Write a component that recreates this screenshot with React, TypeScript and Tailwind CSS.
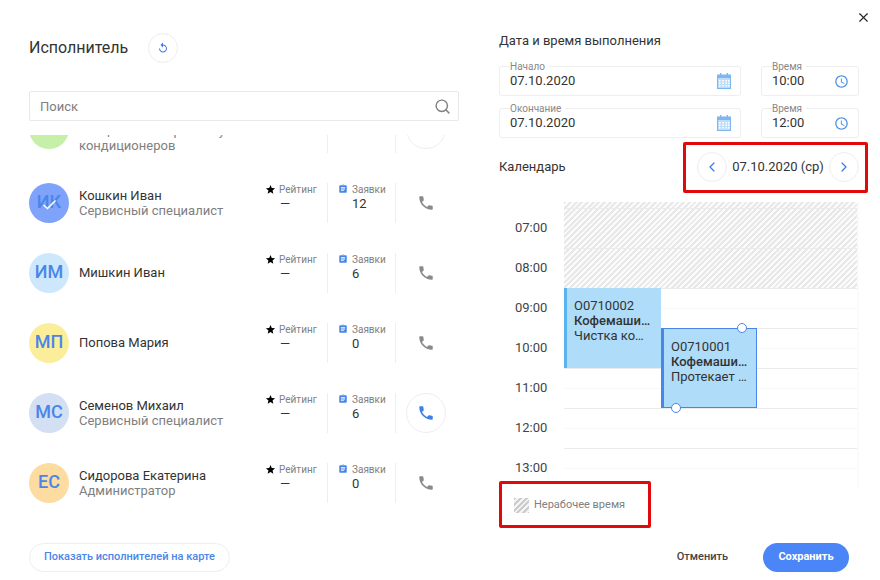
import React from "react";
import { MdPhone, MdStar, MdAssignment, MdReplay, MdAccessTime } from "react-icons/md";
import { ChevronLeft, ChevronRight, Search, X } from "lucide-react";

type P = { ini: string; bg: string; name: string; role?: string; count?: string; active?: boolean; tall?: boolean; check?: boolean };

const people: P[] = [
  { ini: "СМ", bg: "bg-[#c6f0a9]", name: "Смирнов Максим", role: "Специалист по ремонту кондиционеров", count: "3", active: true, tall: true },
  { ini: "ИК", bg: "bg-[#7fa2fb]", name: "Кошкин Иван", role: "Сервисный специалист", count: "12", check: true },
  { ini: "ИМ", bg: "bg-[#cde8fd]", name: "Мишкин Иван", count: "6" },
  { ini: "МП", bg: "bg-[#fbee9b]", name: "Попова Мария", count: "0" },
  { ini: "МС", bg: "bg-[#d3dff3]", name: "Семенов Михаил", role: "Сервисный специалист", count: "6", active: true },
  { ini: "ЕС", bg: "bg-[#fcdca0]", name: "Сидорова Екатерина", role: "Администратор", count: "0" },
];

const hatch = "bg-[repeating-linear-gradient(135deg,#e8e8e8_0,#e8e8e8_2px,#fbfbfb_2px,#fbfbfb_4px)]";

function CalendarIcon() {
  return (
    <svg width="14" height="16" viewBox="0 0 14 16" className="text-[#7db7f2]">
      <rect x="0.5" y="2" width="13" height="13.5" fill="#bcdcf8" stroke="currentColor" strokeWidth="1" />
      <rect x="0" y="2" width="14" height="3" fill="currentColor" />
      <rect x="3" y="0" width="1.4" height="3" fill="currentColor" />
      <rect x="9.6" y="0" width="1.4" height="3" fill="currentColor" />
      {[2, 5.2, 8.4, 11].map((x) =>
        [7, 9.5, 12].map((y) => <rect key={`${x}-${y}`} x={x} y={y} width="1.6" height="1.5" fill="#ffffff" />)
      )}
    </svg>
  );
}

function Field({ label, value, icon, className }: { label: string; value: string; icon: React.ReactNode; className: string }) {
  return (
    <div className={`relative h-[30px] flex items-center justify-between border border-[#eeeeee] rounded-[3px] pl-[10px] text-[13px] text-[#333333] ${className}`}>
      <span className="absolute left-[10px] -top-[6px] bg-white pr-[4px] text-[10px] leading-[12px] text-[#888888]">{label}</span>
      <span>{value}</span>
      {icon}
    </div>
  );
}

function Row({ p }: { p: P }) {
  return (
    <div className={`flex items-center mb-[30px] ${p.tall ? "h-[48px]" : "h-10"}`}>
      <div className={`relative w-10 h-10 shrink-0 rounded-full flex items-center justify-center text-[18px] leading-[38px] pb-[2px] font-medium text-[#4a86e8] ${p.bg}`}>
        {p.ini}
        {p.check && (
          <svg width="16" height="12" viewBox="0 0 16 12" className="absolute left-[13px] top-[16px]">
            <path d="M1.5 6 L5.5 9.5 L13.5 1.5" fill="none" stroke="#ffffff" strokeWidth="1.6" />
          </svg>
        )}
      </div>
      <div className={`w-[196px] shrink-0 pl-[10px] pr-[4px] text-[13px] leading-[15px] ${p.role ? "" : "pb-[2px]"} ${p.tall ? "pt-[2px]" : ""}`}>
        <div className="text-[#333333]">{p.name}</div>
        {p.role && <div className="text-[#808080]">{p.role}</div>}
      </div>
      <div className="w-[63px] shrink-0 self-stretch border-r border-[#eeeeee]">
        <div className="flex items-center h-[12px] text-[10px] text-[#808080]">
          <MdStar className="text-[11px] text-black mr-[3px]" />
          <span>Рейтинг</span>
        </div>
        <div className="pl-[15px] text-[13px] leading-[16px] mt-[1px] text-[#333333]">—</div>
      </div>
      <div className="w-[68px] shrink-0 self-stretch border-r border-[#eeeeee] pl-[10px]">
        <div className="flex items-center h-[12px] text-[10px] text-[#808080]">
          <MdAssignment className="text-[10px] text-[#4a86e8] mr-[4px]" />
          <span>Заявки</span>
        </div>
        <div className="pl-[14px] text-[13px] leading-[16px] mt-[1px] text-[#333333]">{p.count}</div>
      </div>
      <div className="pl-[10px]">
        <div className={`w-10 h-10 rounded-full flex items-center justify-center ${p.active ? "border border-[#eeeeee]" : ""}`}>
          {!p.tall && <MdPhone className={`text-[18px] ${p.active ? "text-[#3b82e8]" : "text-[#8a8a8a]"}`} />}
        </div>
      </div>
    </div>
  );
}

function Slot({ hatched }: { hatched?: boolean }) {
  return (
    <div className="h-10 shrink-0 border-t border-[#ebebeb]">
      {!hatched && <div className="h-5 border-b border-[#f8f8f8]" />}
    </div>
  );
}

function Event({ id, title, text, selected }: { id: string; title: string; text: string; selected?: boolean }) {
  return (
    <div className={`absolute h-20 bg-[#aedcf9] pl-[7px] pr-[8px] pt-[10px] text-[13px] leading-[15px] text-[#333333] border-l-[3px] ${selected ? "left-[97px] top-[126px] w-[96px] border border-l-[3px] border-[#4a86e8]" : "left-0 top-[86px] w-[97px] border-[#5ab5ee]"}`}>
      <div className="truncate">{id}</div>
      <div className="truncate font-medium">{title}</div>
      <div className="truncate">{text}</div>
      {selected && (
        <>
          <span className="absolute left-[73px] -top-[6px] w-[10px] h-[10px] rounded-full bg-white border border-[#4a86e8]" />
          <span className="absolute left-[7px] -bottom-[6px] w-[10px] h-[10px] rounded-full bg-white border border-[#4a86e8]" />
        </>
      )}
    </div>
  );
}

export default function App() {
  return (
    <div className="relative w-[880px] h-[580px] bg-white flex overflow-hidden font-['Roboto',sans-serif]">
      <div className="w-[478px] shrink-0 pl-[29px] pr-[19px] pt-[33px] flex flex-col">
        <div className="flex items-center h-[30px]">
          <h1 className="w-[119px] text-[16px] text-[#333333]">Исполнитель</h1>
          <button className="w-[30px] h-[30px] rounded-full border border-[#eeeeee] flex items-center justify-center">
            <MdReplay className="text-[12px] text-[#3b78e7]" />
          </button>
        </div>
        <div className="mt-[28px] h-[30px] shrink-0 border border-[#e8e8e8] rounded-[2px] flex items-center justify-between pl-[10px] pr-[7px] text-[13px] text-[#808080]">
          <span className="pt-[2px]">Поиск</span>
          <Search size={17} strokeWidth={2} className="text-[#808080]" />
        </div>
        <div className="mt-[14px] h-[380px] overflow-hidden">
          <div className="-mt-[30px]">
            {people.map((p) => (
              <Row key={p.name} p={p} />
            ))}
          </div>
        </div>
        <div className="mt-[28px]">
          <button className="w-[201px] h-[29px] rounded-full border border-[#eeeeee] text-[11px] font-medium text-[#4a86e8]">
            Показать исполнителей на карте
          </button>
        </div>
      </div>

      <div className="w-[360px] shrink-0 ml-[21px] pt-[33px] flex flex-col">
        <div className="text-[13px] leading-[15px] text-[#333333]">Дата и время выполнения</div>
        <div className="mt-[18px] flex flex-col gap-[12px]">
          <div className="flex gap-[20px]">
            <Field label="Начало" value="07.10.2020" className="w-[242px] pr-[9px]" icon={<CalendarIcon />} />
            <Field label="Время" value="10:00" className="w-[98px] pr-[9px]" icon={<MdAccessTime className="text-[15px] text-[#4a90e2]" />} />
          </div>
          <div className="flex gap-[20px]">
            <Field label="Окончание" value="07.10.2020" className="w-[242px] pr-[9px]" icon={<CalendarIcon />} />
            <Field label="Время" value="12:00" className="w-[98px] pr-[9px]" icon={<MdAccessTime className="text-[15px] text-[#4a90e2]" />} />
          </div>
        </div>
        <div className="mt-[14px] h-[30px] flex items-center justify-between text-[13px] text-[#333333]">
          <span>Календарь</span>
          <div className="flex items-center gap-[5px]">
            <button className="w-[30px] h-[30px] rounded-full border border-[#eeeeee] flex items-center justify-center">
              <ChevronLeft size={16} strokeWidth={1.8} className="text-[#3b78e7]" />
            </button>
            <span className="w-[92px] text-center">07.10.2020 (ср)</span>
            <button className="w-[30px] h-[30px] rounded-full border border-[#eeeeee] flex items-center justify-center">
              <ChevronRight size={16} strokeWidth={1.8} className="text-[#3b78e7]" />
            </button>
          </div>
        </div>
        <div className="mt-[20px] h-[286px] overflow-hidden flex">
          <div className="w-[65px] shrink-0 pt-[6px] pl-[16px] text-[13px] text-[#444444]">
            {["07:00", "08:00", "09:00", "10:00", "11:00", "12:00", "13:00"].map((t) => (
              <div key={t} className="h-10 flex items-center">{t}</div>
            ))}
          </div>
          <div className="relative w-[296px] shrink-0 border-r-[3px] border-[#fafafa]">
            <div className={`h-[86px] ${hatch} flex flex-col`}>
              <div className="h-[6px] shrink-0" />
              <Slot hatched />
              <Slot hatched />
            </div>
            <div className="flex flex-col">
              {[0, 1, 2, 3, 4].map((i) => (
                <Slot key={i} />
              ))}
            </div>
            <Event id="O0710002" title="Кофемашина" text="Чистка кофемашины" />
            <Event id="O0710001" title="Кофемашина" text="Протекает вода" selected />
          </div>
        </div>
        <div className="mt-[10px] pl-[15px] h-[15px] flex items-center gap-[5px]">
          <span className="w-[15px] h-[15px] bg-[repeating-linear-gradient(135deg,#cccccc_0,#cccccc_2px,#f4f4f4_2px,#f4f4f4_4px)]" />
          <span className="text-[11px] text-[#808080]">Нерабочее время</span>
        </div>
        <div className="mt-[30px] pr-[10px] flex items-center justify-end">
          <button className="text-[11px] font-medium text-[#444444]">Отменить</button>
          <button className="ml-[35px] w-[86px] h-[29px] rounded-full bg-[#4a86f7] text-[11px] font-bold text-white">Сохранить</button>
        </div>
      </div>

      <X size={15} strokeWidth={1.8} className="absolute left-[856px] top-[10px] text-[#222222]" />
      <div className="absolute left-[683px] top-[142px] w-[185px] h-[51px] border-[3px] border-[#e00a0a] rounded-[2px]" />
      <div className="absolute left-[499px] top-[481px] w-[152px] h-[47px] border-[3px] border-[#e00a0a] rounded-[2px]" />
    </div>
  );
}
